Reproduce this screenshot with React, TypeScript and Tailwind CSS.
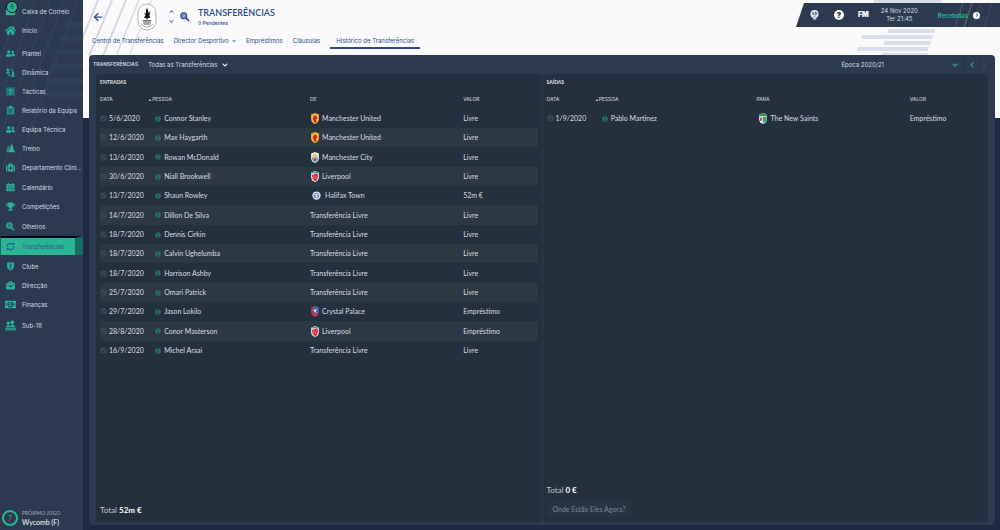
import React from 'react';
import { FaBriefcase, FaChevronDown, FaChevronLeft, FaChevronRight, FaChevronUp, FaHome, FaMedkit, FaTrophy, FaUserFriends } from 'react-icons/fa';
import { FiArrowLeft } from 'react-icons/fi';

type Club = { name: string; crest?: string };
type Transfer = { date: string; person: string; club: Club; value: string };

const UNITED = { name: 'Manchester United', crest: 'united' };
const LIVERPOOL = { name: 'Liverpool', crest: 'liverpool' };
const FREE = { name: 'Transferência Livre' };

const arrivals: Transfer[] = [
  { date: '5/6/2020', person: 'Connor Stanley', club: UNITED, value: 'Livre' },
  { date: '12/6/2020', person: 'Max Haygarth', club: UNITED, value: 'Livre' },
  { date: '13/6/2020', person: 'Rowan McDonald', club: { name: 'Manchester City', crest: 'city' }, value: 'Livre' },
  { date: '30/6/2020', person: 'Niall Brookwell', club: LIVERPOOL, value: 'Livre' },
  { date: '13/7/2020', person: 'Shaun Rowley', club: { name: 'Halifax Town', crest: 'halifax' }, value: '52m €' },
  { date: '14/7/2020', person: 'Dillon De Silva', club: FREE, value: 'Livre' },
  { date: '18/7/2020', person: 'Dennis Cirkin', club: FREE, value: 'Livre' },
  { date: '18/7/2020', person: 'Calvin Ughelumba', club: FREE, value: 'Livre' },
  { date: '18/7/2020', person: 'Harrison Ashby', club: FREE, value: 'Livre' },
  { date: '25/7/2020', person: 'Omari Patrick', club: FREE, value: 'Livre' },
  { date: '29/7/2020', person: 'Jason Lokilo', club: { name: 'Crystal Palace', crest: 'palace' }, value: 'Empréstimo' },
  { date: '28/8/2020', person: 'Conor Masterson', club: LIVERPOOL, value: 'Empréstimo' },
  { date: '16/9/2020', person: 'Michel Araai', club: FREE, value: 'Livre' },
];

const departures: Transfer[] = [
  { date: '1/9/2020', person: 'Pablo Martinez', club: { name: 'The New Saints', crest: 'saints' }, value: 'Empréstimo' },
];

const icon = 'mx-px h-[9px] w-[9px] shrink-0';
const wideIcon = 'h-[11px] w-[11px] shrink-0';

const MailIcon = () => (
  <span className="relative block h-[11px] w-[11px] shrink-0">
    <svg viewBox="0 0 12 12" className="h-full w-full" fill="currentColor">
      <path d="M1 3h10v7H1z" />
    </svg>
    <span className="absolute -top-[5px] left-px flex h-3 w-3 items-center justify-center rounded-full border border-[#0c141d] bg-[#2ab597] text-[6px] leading-none text-[#12313a]">
      6
    </span>
  </span>
);

const DynamicsIcon = () => (
  <svg viewBox="0 0 24 24" className={icon} fill="none" stroke="currentColor" strokeWidth="2.6">
    <path d="M12 4a9 9 0 0 1 8 9M4 12a8 8 0 0 0 8 8" />
    <circle cx="5" cy="5" r="3.500" fill="currentColor" stroke="none" />
    <path d="M0 13c0-5 10-5 10 0zM13 23c0-5 11-5 11 0z" fill="currentColor" stroke="none" />
    <circle cx="18.500" cy="15" r="3.500" fill="currentColor" stroke="none" />
  </svg>
);

const TacticsIcon = () => (
  <svg viewBox="0 0 24 24" className={icon}>
    <path d="M1 1h22v22H1z" fill="#1f7f76" />
    <path d="M12 4l4 5h-3v5h-2V9H8zM10.500 16h3v3h-3z" fill="#2dc7a5" />
  </svg>
);

const ReportIcon = () => (
  <svg viewBox="0 0 24 24" className={icon}>
    <path d="M2 3h20v20H2z" fill="#238f83" />
    <path d="M8 0h8v5H8z" fill="#2ab597" />
    <path d="M7 10h10M7 14h10M7 18h7" stroke="#24475a" strokeWidth="2" />
  </svg>
);

const TrainingIcon = () => (
  <svg viewBox="0 0 24 24" className={icon} fill="currentColor">
    <path d="M5 5h3l4 16H0z" opacity=".6" />
    <path d="M13 2h4l5 17h2v3H7v-3h2z" />
  </svg>
);

const CalendarIcon = () => (
  <svg viewBox="0 0 24 24" className={icon}>
    <path d="M1 3h22v19H1z" fill="#2ab597" />
    <path d="M1 8h22M1 15h22M7 8v14M12.500 8v14M18 8v14" stroke="#1f6a6c" strokeWidth="1.500" />
    <path d="M6 0v5M18 0v5" stroke="#2ab597" strokeWidth="3" />
  </svg>
);

const ScoutIcon = () => (
  <svg viewBox="0 0 24 24" className={icon}>
    <path d="M14 14l8 8" stroke="#2ab597" strokeWidth="4" />
    <circle cx="9" cy="9" r="7" fill="#1f7f76" stroke="#2ab597" strokeWidth="3" />
  </svg>
);

const TransferIcon = () => (
  <svg viewBox="0 0 24 24" className={icon} fill="none" stroke="#21568a" strokeWidth="3">
    <path d="M3 13a9 9 0 0 1 14-8M21 11a9 9 0 0 1-14 8" />
    <path d="M15 8h7V1zM9 16H2v7z" fill="#21568a" stroke="none" />
  </svg>
);

const ShieldIcon = () => (
  <svg viewBox="0 0 24 24" className={icon}>
    <path d="M3 1h18v10c0 6-4 9-9 12-5-3-9-6-9-12z" fill="#2ab597" />
    <path d="M9 4h6v14l-3 2-3-2z" fill="#1d716f" />
  </svg>
);

const MoneyIcon = () => (
  <svg viewBox="0 0 24 24" className={wideIcon}>
    <path d="M0 4h24v16H0z" fill="#2ab597" />
    <circle cx="12" cy="12" r="6.500" fill="#1c4f5c" />
    <text x="12" y="16" textAnchor="middle" fontSize="12" fontWeight="700" fill="#2ab597">£</text>
    <path d="M3 9v6M21 9v6" stroke="#1c4f5c" strokeWidth="2" />
  </svg>
);

const YouthIcon = () => (
  <svg viewBox="0 0 24 24" className={wideIcon} fill="currentColor">
    <circle cx="7" cy="7" r="3.500" />
    <circle cx="16" cy="5" r="4" />
    <path d="M2 16c0-6 9-6 9-1 1-6 11-6 11 1z" />
    <path d="M0 17h24v6H0z" opacity=".7" />
  </svg>
);

const menu = [
  [
    { label: 'Caixa de Correio', icon: <MailIcon /> },
    { label: 'Início', icon: <FaHome className={wideIcon} /> },
  ],
  [
    { label: 'Plantel', icon: <FaUserFriends className={icon} /> },
    { label: 'Dinâmica', icon: <DynamicsIcon /> },
    { label: 'Tácticas', icon: <TacticsIcon /> },
    { label: 'Relatório da Equipa', icon: <ReportIcon /> },
    { label: 'Equipa Técnica', icon: <FaUserFriends className={icon} /> },
    { label: 'Treino', icon: <TrainingIcon /> },
    { label: 'Departamento Clíni...', icon: <FaMedkit className={icon} /> },
  ],
  [
    { label: 'Calendário', icon: <CalendarIcon /> },
    { label: 'Competições', icon: <FaTrophy className={icon} /> },
  ],
  [
    { label: 'Olheiros', icon: <ScoutIcon /> },
    { label: 'Transferências', icon: <TransferIcon />, active: true },
  ],
  [
    { label: 'Clube', icon: <ShieldIcon /> },
    { label: 'Direcção', icon: <FaBriefcase className={icon} /> },
    { label: 'Finanças', icon: <MoneyIcon /> },
  ],
  [{ label: 'Sub-18', icon: <YouthIcon /> }],
];

const groupGap = ['', 'mt-1', 'mt-px', 'mt-px', 'mt-[2px]', 'mt-[2px]'];

const Sidebar: React.FC = () => (
  <aside className="relative flex w-[83px] shrink-0 flex-col overflow-hidden bg-[#2b3a4e] font-['Inter',sans-serif] text-[6px] text-[#d5dae0]">
    <svg className="absolute inset-x-0 top-0 h-[180px] w-full" viewBox="0 0 83 180" fill="none">
      <path d="M22 0L-40 170M36 0L-26 170M50 0L-12 170M64 0L2 170M78 0L16 170" stroke="#314156" strokeWidth="2" />
      <path d="M66 22h17v5H64zM62 36h21v5H60zM57 50h26v5H55zM52 64h31v5H50zM47 78h36v5H45zM42 92h41v5H40z" fill="#304055" />
    </svg>
    <nav className="relative flex flex-col pt-[2px]">
      {menu.map((group, i) => (
        <ul key={i} className={groupGap[i]}>
          {group.map((item) => (
            <li key={item.label}>
              <a
                href="#"
                className={
                  'active' in item
                    ? 'flex h-[19px] items-center gap-[6px] border-l border-r-8 border-t-2 border-[#176e60] border-t-[#050c12] bg-[#2ab597] pl-1 text-[#1f5c86]'
                    : 'flex h-[19px] items-center gap-[6px] whitespace-nowrap pl-[5px] text-[#2ab597]'
                }
              >
                {item.icon}
                <span className={'active' in item ? '' : 'text-[#d5dae0]'}>{item.label}</span>
              </a>
            </li>
          ))}
        </ul>
      ))}
    </nav>
    <div className="relative mt-auto flex items-center gap-1 pb-[3px] pl-[2px] font-['Lato',sans-serif]">
      <span className="flex h-4 w-4 items-center justify-center rounded-full border-2 border-[#2ab597] text-[7px] text-[#2ab597]">7</span>
      <div>
        <p className="text-[5px] leading-[9px] text-[#a9b2bd]">PRÓXIMO JOGO</p>
        <p className="text-[7px] leading-[9px] text-white">Wycomb (F)</p>
      </div>
    </div>
  </aside>
);

const ClubBadge: React.FC = () => (
  <svg viewBox="0 0 20 28" className="h-7 w-5 shrink-0">
    <rect x="1" y="1" width="18" height="26" rx="9" fill="#fff" stroke="#8f8f93" strokeWidth=".7" />
    <path d="M9 7l1-2 1 2 .5 3 2-2-1 4 .5 3h-2l-1 2-1-2H7l1.500-3-1.500-2 2 .5z" fill="#16161a" />
    <path d="M5.500 17h9l-1.500 5H7z" fill="#77777c" />
    <path d="M6 19h8M7 21h6" stroke="#ececef" strokeWidth=".8" />
    <path d="M4 21q6 6 12 0" fill="none" stroke="#77777c" strokeWidth=".7" />
  </svg>
);

const tabs = ['Centro de Transferências', 'Director Desportivo', 'Empréstimos', 'Cláusulas', 'Histórico de Transferências'];

const Header: React.FC = () => (
  <header className="flex justify-between font-['Inter',sans-serif] text-[#2c4a94]">
    <div className="pl-1">
      <div className="flex h-[33px] items-center">
        <button type="button" aria-label="Voltar" className="w-[45px] text-[12px]">
          <FiArrowLeft strokeWidth={2.5} />
        </button>
        <ClubBadge />
        <div className="ml-[7px] flex w-[15px] flex-col items-center gap-[5px] text-[5px]">
          <button type="button" aria-label="Anterior"><FaChevronUp /></button>
          <button type="button" aria-label="Seguinte"><FaChevronDown /></button>
        </div>
        <button type="button" aria-label="Procurar" className="ml-px">
          <svg viewBox="0 0 24 24" className="h-[10px] w-[10px]">
            <path d="M14 14l8 8" stroke="#2c4a94" strokeWidth="4" />
            <circle cx="9" cy="9" r="7" fill="#8e9dc6" stroke="#2c4a94" strokeWidth="3" />
          </svg>
        </button>
        <div className="ml-2">
          <h1 className="font-['Lato',sans-serif] text-[9px] font-semibold leading-[13px]">TRANSFERÊNCIAS</h1>
          <p className="text-[5px] font-medium leading-[8px]">0 Pendentes</p>
        </div>
      </div>
      <nav className="flex h-4 gap-[10px] text-[6px] leading-4">
        {tabs.map((tab, i) => (
          <a
            key={tab}
            href="#"
            className={
              i === 4
                ? 'border-b-2 border-[#2c4a94] px-[6px]'
                : 'flex items-center gap-[3px]'
            }
          >
            {tab}
            {i === 1 && <FaChevronDown className="h-1 w-1" />}
          </a>
        ))}
      </nav>
    </div>
    <div className="relative mt-[3px] flex h-[24px] w-[204px] items-center bg-[#2b3a4e] pl-[14px] text-white [clip-path:polygon(8px_0,100%_0,100%_100%,0_100%)]">
      <svg className="absolute right-0 top-0 h-full w-16" viewBox="0 0 64 24" fill="none" stroke="#505e71">
        <path d="M36 0L28 24" strokeWidth="1.500" />
        <path d="M45 0L37 24M56 0L48 24" strokeWidth=".5" />
        <path d="M27 0L19 24" />
      </svg>
      <button type="button" aria-label="Mundo" className="w-6">
        <svg viewBox="0 0 20 22" className="h-[10px] w-[9px]">
          <circle cx="10" cy="9" r="9" fill="#e8ebee" />
          <path d="M5 5l5 2-3 4zM12 4l4 3-3 4zM7 14l6-1" stroke="#566375" fill="#8d97a3" strokeWidth="1.500" />
          <path d="M7 18h7v3H7z" fill="#e8ebee" />
        </svg>
      </button>
      <button type="button" aria-label="Ajuda" className="flex h-[10px] w-[10px] items-center justify-center rounded-full bg-white text-[8px] font-black leading-none text-[#2b3a4e]">
        ?
      </button>
      <button type="button" className="ml-[14px] text-[7px] font-black">FM</button>
      <div className="ml-3 text-center text-[6px] leading-[8px] text-[#d5dae0]">
        <p>24 Nov 2020</p>
        <p>Ter 21:45</p>
      </div>
      <button type="button" className="relative ml-5 flex items-center gap-[5px] text-[6px] font-semibold text-[#2ab597]">
        Recebidas
        <span className="flex h-[7px] w-[7px] items-center justify-center rounded-full bg-white text-[4px] text-[#2b3a4e]">
          <FaChevronRight />
        </span>
      </button>
    </div>
  </header>
);

const SHIELD = 'M1 2l5-2 5 2v6c0 3-2 5-5 6-3-1-5-3-5-6z';

const Crest: React.FC<{ kind: string }> = ({ kind }) => {
  if (kind === 'halifax') {
    return (
      <svg viewBox="0 0 12 12" className="mx-[2px] h-[9px] w-[9px] shrink-0">
        <circle cx="6" cy="6" r="5.500" fill="#dfe6ee" />
        <circle cx="6" cy="6" r="3.800" fill="#6c8fb8" />
        <path d="M3.500 5h5M4 8h4M6 4v4" stroke="#fff" />
      </svg>
    );
  }
  return (
    <svg viewBox="0 0 12 14" className={kind === 'saints' ? 'mx-px h-[11px] w-[10px] shrink-0' : 'h-[11px] w-[10px] shrink-0'}>
      {kind === 'united' && (
        <>
          <path d={SHIELD} fill="#f3b72c" />
          <path d="M4 3l4 1 1 3-2 1 1 3-2 2-2-4-1-3 2-1z" fill="#c8202c" />
        </>
      )}
      {kind === 'city' && (
        <>
          <path d={SHIELD} fill="#eef0e6" />
          <path d="M2 7h8c0 4-2 5-4 6-2-1-4-2-4-6z" fill="#5f9ed0" />
          <path d="M3 3h6v4H3z" fill="#e5c25a" />
          <circle cx="6" cy="10" r="1.600" fill="#c93a3a" />
        </>
      )}
      {kind === 'liverpool' && (
        <>
          <path d={SHIELD} fill="#f1dfe1" />
          <path d="M2 5l7-2 1 4-2 5-2 1-3-3z" fill="#d52b45" />
          <path d="M5 5l-1 4M8 6l-2 4" stroke="#f1b9c0" strokeWidth=".7" />
          <path d="M1 2l5-1.500L11 2v1H1z" fill="#35a79a" />
        </>
      )}
      {kind === 'palace' && (
        <>
          <path d={SHIELD} fill="#c22e45" />
          <path d="M3 1h7l1 7-4 3-3-4z" fill="#3767ad" />
          <path d="M3 4l3 1 3-2-2 4 1 3-3-3z" fill="#dfe4ee" />
        </>
      )}
      {kind === 'saints' && (
        <>
          <path d={SHIELD} fill="#e8efe4" />
          <path d="M1 2l5-2 5 2v2H1z" fill="#2d9a55" />
          <path d="M2 6h3v4H2z" fill="#d2483a" />
          <path d="M6 5h5l-1 6-4 2z" fill="#2ca38b" />
        </>
      )}
    </svg>
  );
};

type PanelProps = { title: string; clubLabel: string; rows: Transfer[]; total: string; children?: React.ReactNode };

const TransferPanel: React.FC<PanelProps> = ({ title, clubLabel, rows, total, children }) => (
  <section className="flex flex-1 flex-col rounded-sm bg-[#25303f] px-1 pb-[5px]">
    <h2 className="pt-1 text-[5px] font-bold leading-[9px] text-[#e2e5e8]">{title}</h2>
    <table className="mt-1 w-full table-fixed text-left text-[7px] leading-[9px] text-[#d9dde1]">
      <thead className="font-['Inter',sans-serif] text-[5px] text-[#c3c8ce]">
        <tr className="h-[18px] border-b border-[#222c39]">
          <th className="w-[11%] font-medium">DATA</th>
          <th className="w-[37%] font-medium">
            <span className="flex items-center">
              <svg viewBox="0 0 6 4" className="h-[2px] w-1" fill="currentColor"><path d="M3 0l3 4H0z" /></svg>
              PESSOA
            </span>
          </th>
          <th className="w-[35%] font-medium">{clubLabel}</th>
          <th className="w-[17%] font-medium">VALOR</th>
        </tr>
      </thead>
      <tbody>
        {rows.map((row) => (
          <tr key={row.person} className="h-[19px] even:bg-[#2c3844] nth-[3n]:h-5">
            <td>
              <span className="flex items-center gap-[2px] whitespace-nowrap">
                <svg viewBox="0 0 12 12" className="h-[7px] w-[7px] shrink-0">
                  <circle cx="6" cy="6" r="5.500" fill="#3b4652" />
                  <path d="M3 6l2 2 4-4" fill="none" stroke="#232d3a" strokeWidth="1.500" />
                </svg>
                {row.date}
              </span>
            </td>
            <td>
              <span className="flex items-center gap-[3px] pl-[7px]">
                <svg viewBox="0 0 12 12" className="h-[6px] w-[6px] shrink-0">
                  <circle cx="6" cy="6" r="5.500" fill="#24786f" />
                  <path d="M6 2v2M6 5v5" stroke="#25303f" strokeWidth="2" />
                </svg>
                {row.person}
              </span>
            </td>
            <td>
              <span className="flex items-center gap-[2px]">
                {row.club.crest && <Crest kind={row.club.crest} />}
                {row.club.name}
              </span>
            </td>
            <td>{row.value}</td>
          </tr>
        ))}
      </tbody>
    </table>
    <div className="mt-auto text-[8px] leading-[14px] text-[#c3c8ce]">
      <p>
        Total <b className="text-white">{total}</b>
      </p>
      {children}
    </div>
  </section>
);

const App: React.FC = () => {
  return (
    <div className="relative flex min-h-screen bg-[#1d2a41] font-['Lato',sans-serif]">
      <div className="absolute inset-x-0 top-0 h-[118px] overflow-hidden bg-[#fafafa]">
        <svg className="absolute left-[83px] top-0 h-14 w-24" viewBox="0 0 96 56" fill="none" stroke="#d3d8e6" strokeWidth="2">
          <path d="M15 0L-8 56M29 0L6 56M43 0L20 56" />
          <path d="M56 0L33 56" strokeWidth="1.500" />
          <path d="M69 0L46 56" strokeWidth="1" />
        </svg>
        <svg className="absolute right-[56px] top-0 h-14 w-[90px]" viewBox="0 0 90 56" fill="#dadeea">
          <path d="M20 0h68l-1 3H19zM35 29h46l-1 4H33zM8 35h71l-1 4H7zM31 41h46l-1 4H29zM4 47h71l-1 4H3zM28 53h46l-1 4H26z" />
        </svg>
      </div>
      <Sidebar />
      <div className="relative flex min-w-0 flex-1 flex-col">
        <div className="pl-[5px]">
          <Header />
        </div>
        <main className="mb-[5px] ml-[6px] mr-[5px] mt-[6px] flex flex-1 flex-col rounded bg-[#2b3a4e] text-[#d5dae0]">
          <div className="flex h-[19px] items-center pl-1 pr-[7px] font-['Inter',sans-serif] text-[6px]">
            <h2 className="text-[5px] font-semibold">TRANSFERÊNCIAS</h2>
            <button type="button" className="ml-[10px] flex items-center gap-[5px]">
              Todas as Transferências <FaChevronDown className="h-[6px] w-[6px] text-white" />
            </button>
            <button type="button" className="ml-auto flex items-center gap-[68px]">
              Época 2020/21 <FaChevronDown className="h-[6px] w-[6px] text-[#2ab597]" />
            </button>
            <button type="button" aria-label="Época anterior" className="ml-[5px] flex h-full w-4 items-center justify-center border-l border-[#26364a] text-[6px] text-[#2ab597]">
              <FaChevronLeft />
            </button>
            <button type="button" aria-label="Época seguinte" className="flex h-full w-[9px] items-center justify-center border-l border-[#26364a] text-[6px] text-[#3f4e61]">
              <FaChevronRight />
            </button>
          </div>
          <div className="mx-[7px] mb-[3px] flex flex-1 gap-px">
            <TransferPanel title="ENTRADAS" clubLabel="DE" rows={arrivals} total="52m €" />
            <TransferPanel title="SAÍDAS" clubLabel="PARA" rows={departures} total="0 €">
              <button type="button" className="mt-1 h-4 rounded-sm bg-[#283444] px-[6px] text-[7px] leading-4 text-[#7c8691]">
                Onde Estão Eles Agora?
              </button>
            </TransferPanel>
          </div>
        </main>
      </div>
    </div>
  );
};

export default App;
